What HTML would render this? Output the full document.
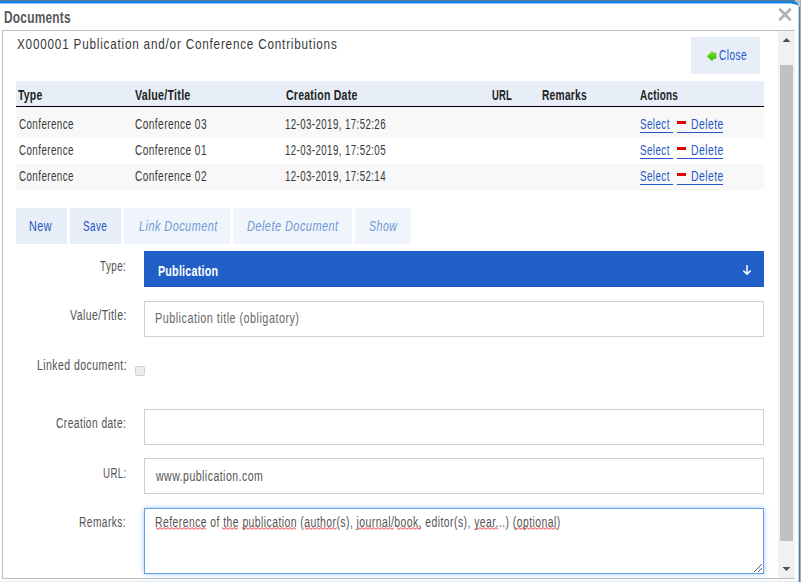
<!DOCTYPE html>
<html><head><meta charset="utf-8"><style>
html,body{margin:0;padding:0;width:801px;height:582px;overflow:hidden;background:#fff;font-family:"Liberation Sans",sans-serif;}
.t{position:absolute;white-space:nowrap;transform-origin:0 0;}
.a{position:absolute;box-sizing:border-box;}
.bg{background:#e8eef8}
.dis{background:#f0f4fb}
.inp{border:1px solid #cfcfcf;background:#fff}

</style></head><body>
<div class="a" style="left:0;top:0;width:801px;height:582px;background:#bfc3c7"></div>
<div class="a" style="left:0;top:0;width:795px;height:1px;background:#587a92"></div>
<div class="a" style="left:799px;top:7px;width:1px;height:575px;background:#66768a"></div>
<div class="a" style="left:800px;top:0;width:1px;height:582px;background:#a4acb4"></div>
<div class="a" style="left:-10px;top:1px;width:809px;height:581px;border-top:3px solid #1684e6;border-right:1px solid #b4d2f2;border-top-right-radius:6px;background:#fff"></div>
<div class="a" style="left:0;top:3px;width:792px;height:1px;background:rgba(255,255,255,0.55)"></div>
<div class="a" style="left:0;top:581px;width:798px;height:1px;background:#dcebf8"></div>
<svg class="a" style="left:778px;top:8px" width="14" height="13" viewBox="0 0 14 13"><path d="M2.2 1.7 L11.8 11.3 M11.8 1.7 L2.2 11.3" stroke="#b5b5b5" stroke-width="3" stroke-linecap="round"/></svg>
<div class="a" style="left:2px;top:30px;width:793px;height:549px;border:1px solid #bdbdbd;border-right:none"></div>
<div class="a" style="left:778px;top:31px;width:17px;height:547px;background:#f1f1f1"></div>
<div class="a" style="left:780px;top:65px;width:13px;height:476px;background:#c1c1c1"></div>
<svg class="a" style="left:782px;top:37px" width="9" height="6"><path d="M0.5 5 L4.5 1 L8.5 5 Z" fill="#505050"/></svg>
<svg class="a" style="left:782px;top:566px" width="9" height="6"><path d="M0.5 1 L4.5 5 L8.5 1 Z" fill="#505050"/></svg>
<div class="a bg" style="left:691px;top:37px;width:69px;height:37px"></div>
<svg class="a" style="left:706px;top:50px" width="11" height="12" viewBox="0 0 11 12"><defs><linearGradient id="g" x1="0" y1="0" x2="0" y2="1"><stop offset="0" stop-color="#90e820"/><stop offset="1" stop-color="#20b400"/></linearGradient></defs><path d="M1.2 6.2 L6.2 1.4 L7.2 3.2 L10 3.2 L10 8.6 L7.2 8.6 L6.2 10.8 Z" fill="url(#g)" stroke="#3cc010" stroke-width="0.6" stroke-linejoin="round"/></svg>
<div class="a bg" style="left:16px;top:81px;width:748px;height:25px"></div>
<div class="a" style="left:16px;top:106px;width:748px;height:1px;background:#000"></div>
<div class="a" style="left:16px;top:107px;width:748px;height:31px;background:#f8f8f8"></div>
<div class="a" style="left:16px;top:164px;width:748px;height:26px;background:#f8f8f8"></div>
<div class="a" style="left:640px;top:132px;width:33px;height:1px;background:#2557c6"></div>
<div class="a" style="left:677px;top:132px;width:46px;height:1px;background:#2557c6"></div>
<div class="a" style="left:677px;top:121px;width:9px;height:3px;background:#e00000"></div>
<div class="a" style="left:640px;top:158px;width:33px;height:1px;background:#2557c6"></div>
<div class="a" style="left:677px;top:158px;width:46px;height:1px;background:#2557c6"></div>
<div class="a" style="left:677px;top:147px;width:9px;height:3px;background:#e00000"></div>
<div class="a" style="left:640px;top:184px;width:33px;height:1px;background:#2557c6"></div>
<div class="a" style="left:677px;top:184px;width:46px;height:1px;background:#2557c6"></div>
<div class="a" style="left:677px;top:173px;width:9px;height:3px;background:#e00000"></div>
<div class="a bg" style="left:16px;top:208px;width:51px;height:36px"></div>
<div class="a bg" style="left:70px;top:208px;width:51px;height:36px"></div>
<div class="a dis" style="left:124px;top:208px;width:106px;height:36px"></div>
<div class="a dis" style="left:233px;top:208px;width:119px;height:36px"></div>
<div class="a dis" style="left:355px;top:208px;width:56px;height:36px"></div>
<div class="a" style="left:144px;top:251px;width:620px;height:36px;background:#1f5fc6"></div>
<svg class="a" style="left:741px;top:264px" width="11" height="12" viewBox="0 0 11 12"><path d="M6 1 V10.3 M2.4 6.6 L6 10.2 L9.6 6.6" stroke="#fff" stroke-width="1.5" fill="none"/></svg>
<div class="a inp" style="left:144px;top:301px;width:620px;height:36px"></div>
<div class="a" style="left:135px;top:366px;width:10px;height:10px;border:1px solid #d0d0d0;border-radius:2px;background:#ededed"></div>
<div class="a inp" style="left:144px;top:409px;width:620px;height:36px"></div>
<div class="a inp" style="left:144px;top:458px;width:620px;height:36px"></div>
<div class="a" style="left:144px;top:508px;width:620px;height:66px;border:1px solid #5ea2ea;box-shadow:0 0 5px rgba(94,162,234,0.55);background:#fff"></div>
<svg class="a" style="left:753px;top:563px" width="10" height="10"><path d="M1 9 L9 1 M5 9 L9 5" stroke="#555" stroke-width="1"/></svg>
<svg class="a" style="left:0;top:0" width="801" height="582"><g fill="none" stroke="#e82020" stroke-width="0.9"><polyline points="156,527.6 158,529.4 160,527.6 162,529.4 164,527.6 166,529.4 168,527.6 170,529.4 172,527.6 174,529.4 176,527.6 178,529.4 180,527.6 182,529.4 184,527.6 186,529.4 188,527.6 190,529.4 192,527.6 194,529.4 196,527.6 198,529.4 200,527.6 202,529.4 204,527.6 206,529.4"/><polyline points="222,527.6 224,529.4 226,527.6 228,529.4 230,527.6 232,529.4 234,527.6 236,529.4 238,527.6"/><polyline points="242,527.6 244,529.4 246,527.6 248,529.4 250,527.6 252,529.4 254,527.6 256,529.4 258,527.6 260,529.4 262,527.6 264,529.4 266,527.6 268,529.4 270,527.6 272,529.4 274,527.6 276,529.4 278,527.6 280,529.4 282,527.6 284,529.4 286,527.6 288,529.4 290,527.6 292,529.4 294,527.6 296,529.4"/><polyline points="305,527.6 307,529.4 309,527.6 311,529.4 313,527.6 315,529.4 317,527.6 319,529.4 321,527.6 323,529.4 325,527.6 327,529.4 329,527.6 331,529.4 333,527.6 335,529.4 337,527.6"/><polyline points="358,527.6 360,529.4 362,527.6 364,529.4 366,527.6 368,529.4 370,527.6 372,529.4 374,527.6 376,529.4 378,527.6 380,529.4 382,527.6 384,529.4 386,527.6 388,529.4 390,527.6 392,529.4 394,527.6"/><polyline points="397,527.6 399,529.4 401,527.6 403,529.4 405,527.6 407,529.4 409,527.6 411,529.4 413,527.6 415,529.4 417,527.6 419,529.4 421,527.6"/><polyline points="476,527.6 478,529.4 480,527.6 482,529.4 484,527.6 486,529.4 488,527.6 490,529.4 492,527.6 494,529.4 496,527.6 498,529.4"/><polyline points="515,527.6 517,529.4 519,527.6 521,529.4 523,527.6 525,529.4 527,527.6 529,529.4 531,527.6 533,529.4 535,527.6 537,529.4 539,527.6 541,529.4 543,527.6 545,529.4 547,527.6 549,529.4 551,527.6 553,529.4 555,527.6 557,529.4"/></g></svg>

<div class="t" style="left:4.48px;top:9.20px;font-size:16.5px;line-height:16.5px;transform:scaleX(0.7225);color:#575757;letter-spacing:0.3px;font-weight:bold;">Documents</div>
<div class="t" style="left:16.50px;top:35.50px;font-size:15px;line-height:15px;transform:scaleX(0.7827);color:#383838;letter-spacing:1.0px;">X000001 Publication and/or Conference Contributions</div>
<div class="t" style="left:719.00px;top:48.00px;font-size:14px;line-height:14px;transform:scaleX(0.7212);color:#2557c6;letter-spacing:0.6px;">Close</div>
<div class="t" style="left:17.60px;top:88.00px;font-size:14px;line-height:14px;transform:scaleX(0.7450);color:#222;letter-spacing:0.3px;font-weight:bold;">Type</div>
<div class="t" style="left:135.30px;top:88.00px;font-size:14px;line-height:14px;transform:scaleX(0.7686);color:#222;letter-spacing:0.3px;font-weight:bold;">Value/Title</div>
<div class="t" style="left:285.60px;top:88.00px;font-size:14px;line-height:14px;transform:scaleX(0.7529);color:#222;letter-spacing:0.3px;font-weight:bold;">Creation Date</div>
<div class="t" style="left:492.30px;top:88.00px;font-size:14px;line-height:14px;transform:scaleX(0.6774);color:#222;letter-spacing:0.3px;font-weight:bold;">URL</div>
<div class="t" style="left:541.70px;top:88.00px;font-size:14px;line-height:14px;transform:scaleX(0.7324);color:#222;letter-spacing:0.3px;font-weight:bold;">Remarks</div>
<div class="t" style="left:640.00px;top:88.00px;font-size:14px;line-height:14px;transform:scaleX(0.7123);color:#222;letter-spacing:0.3px;font-weight:bold;">Actions</div>
<div class="t" style="left:18.80px;top:117.00px;font-size:14px;line-height:14px;transform:scaleX(0.7001);color:#383838;letter-spacing:0.6px;">Conference</div>
<div class="t" style="left:135.30px;top:117.00px;font-size:14px;line-height:14px;transform:scaleX(0.7224);color:#383838;letter-spacing:0.6px;">Conference 03</div>
<div class="t" style="left:284.51px;top:117.00px;font-size:14px;line-height:14px;transform:scaleX(0.6920);color:#383838;letter-spacing:0.6px;">12-03-2019, 17:52:26</div>
<div class="t" style="left:640.30px;top:117.00px;font-size:14px;line-height:14px;transform:scaleX(0.7020);color:#2557c6;letter-spacing:0.6px;">Select</div>
<div class="t" style="left:690.56px;top:117.00px;font-size:14px;line-height:14px;transform:scaleX(0.7427);color:#2557c6;letter-spacing:0.6px;">Delete</div>
<div class="t" style="left:18.80px;top:143.00px;font-size:14px;line-height:14px;transform:scaleX(0.7001);color:#383838;letter-spacing:0.6px;">Conference</div>
<div class="t" style="left:135.30px;top:143.00px;font-size:14px;line-height:14px;transform:scaleX(0.7224);color:#383838;letter-spacing:0.6px;">Conference 01</div>
<div class="t" style="left:284.51px;top:143.00px;font-size:14px;line-height:14px;transform:scaleX(0.6920);color:#383838;letter-spacing:0.6px;">12-03-2019, 17:52:05</div>
<div class="t" style="left:640.30px;top:143.00px;font-size:14px;line-height:14px;transform:scaleX(0.7020);color:#2557c6;letter-spacing:0.6px;">Select</div>
<div class="t" style="left:690.56px;top:143.00px;font-size:14px;line-height:14px;transform:scaleX(0.7427);color:#2557c6;letter-spacing:0.6px;">Delete</div>
<div class="t" style="left:18.80px;top:169.00px;font-size:14px;line-height:14px;transform:scaleX(0.7001);color:#383838;letter-spacing:0.6px;">Conference</div>
<div class="t" style="left:135.30px;top:169.00px;font-size:14px;line-height:14px;transform:scaleX(0.7224);color:#383838;letter-spacing:0.6px;">Conference 02</div>
<div class="t" style="left:284.51px;top:169.00px;font-size:14px;line-height:14px;transform:scaleX(0.6920);color:#383838;letter-spacing:0.6px;">12-03-2019, 17:52:14</div>
<div class="t" style="left:640.30px;top:169.00px;font-size:14px;line-height:14px;transform:scaleX(0.7020);color:#2557c6;letter-spacing:0.6px;">Select</div>
<div class="t" style="left:690.56px;top:169.00px;font-size:14px;line-height:14px;transform:scaleX(0.7427);color:#2557c6;letter-spacing:0.6px;">Delete</div>
<div class="t" style="left:29.43px;top:219.00px;font-size:14px;line-height:14px;transform:scaleX(0.7733);color:#2557c6;letter-spacing:0.6px;">New</div>
<div class="t" style="left:83.40px;top:219.00px;font-size:14px;line-height:14px;transform:scaleX(0.7075);color:#2557c6;letter-spacing:0.6px;">Save</div>
<div class="t" style="left:138.70px;top:219.00px;font-size:14px;line-height:14px;transform:scaleX(0.7779);color:#7099d8;letter-spacing:0.6px;font-style:italic;">Link Document</div>
<div class="t" style="left:247.30px;top:219.00px;font-size:14px;line-height:14px;transform:scaleX(0.7818);color:#7099d8;letter-spacing:0.6px;font-style:italic;">Delete Document</div>
<div class="t" style="left:369.20px;top:219.00px;font-size:14px;line-height:14px;transform:scaleX(0.7611);color:#7099d8;letter-spacing:0.6px;font-style:italic;">Show</div>
<div class="t" style="left:100.40px;top:259.30px;font-size:14px;line-height:14px;transform:scaleX(0.7049);color:#525252;letter-spacing:0.6px;">Type:</div>
<div class="t" style="left:157.80px;top:263.80px;font-size:14px;line-height:14px;transform:scaleX(0.7638);color:#fff;letter-spacing:0.3px;font-weight:bold;">Publication</div>
<div class="t" style="left:69.80px;top:307.80px;font-size:14px;line-height:14px;transform:scaleX(0.7508);color:#525252;letter-spacing:0.6px;">Value/Title:</div>
<div class="t" style="left:155.42px;top:311.10px;font-size:14px;line-height:14px;transform:scaleX(0.7763);color:#6a6a6a;letter-spacing:0.6px;">Publication title (obligatory)</div>
<div class="t" style="left:36.55px;top:357.80px;font-size:14px;line-height:14px;transform:scaleX(0.7498);color:#525252;letter-spacing:0.6px;">Linked document:</div>
<div class="t" style="left:56.10px;top:416.00px;font-size:14px;line-height:14px;transform:scaleX(0.7295);color:#525252;letter-spacing:0.6px;">Creation date:</div>
<div class="t" style="left:103.31px;top:465.50px;font-size:14px;line-height:14px;transform:scaleX(0.6917);color:#525252;letter-spacing:0.6px;">URL:</div>
<div class="t" style="left:156.35px;top:468.80px;font-size:14px;line-height:14px;transform:scaleX(0.7550);color:#555;letter-spacing:0.6px;">www.publication.com</div>
<div class="t" style="left:79.27px;top:514.80px;font-size:14px;line-height:14px;transform:scaleX(0.7266);color:#525252;letter-spacing:0.6px;">Remarks:</div>
<div class="t" style="left:155.26px;top:514.80px;font-size:14px;line-height:14px;transform:scaleX(0.7431);color:#555;letter-spacing:0.6px;">Reference of the publication (author(s), journal/book, editor(s), year...) (optional)</div>
</body></html>
